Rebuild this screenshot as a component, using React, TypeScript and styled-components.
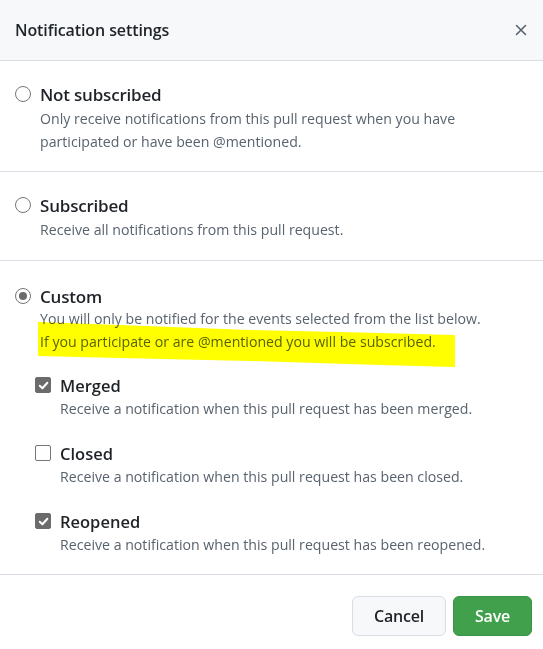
import styled, { createGlobalStyle } from 'styled-components';

const GlobalStyle = createGlobalStyle`
  html, body {
    margin: 0;
    padding: 0;
    background: #ffffff;
  }
  body {
    font-family: "Open Sans", "Noto Sans", "Liberation Sans", sans-serif;
    color: #1f2328;
  }
`

const Dialog = styled.div`
  width: 543px;
  height: 649px;
  display: flex;
  flex-direction: column;
  background: #ffffff;
  position: relative;
  overflow: hidden;
`

const Header = styled.div`
  display: flex;
  justify-content: space-between;
  align-items: center;
  height: 61px;
  padding: 0 14px 0 15px;
  background: #f6f8fa;
  border-bottom: 1px solid #d8dee4;
  box-sizing: border-box;
  .title{
    font-size: 16px;
    font-weight: 600;
    letter-spacing: -0.1px;
  }
`

const CloseButton = styled.button`
  width: 16px;
  height: 16px;
  padding: 0;
  border: none;
  background: transparent;
  display: flex;
  align-items: center;
  justify-content: center;
`

const Section = styled.div<{ $pad: string }>`
  position: relative;
  padding: ${p => p.$pad};
  border-bottom: 1px solid #d8dee4;
`

const OptionRow = styled.label`
  display: flex;
  align-items: center;
  height: 22px;
  gap: 9px;
`

const Radio = styled.span<{ $checked?: boolean }>`
  width: 16px;
  height: 16px;
  box-sizing: border-box;
  border-radius: 50%;
  border: 1px solid #767676;
  background: #ffffff;
  display: flex;
  align-items: center;
  justify-content: center;
  flex-shrink: 0;
  &::after{
    content: '';
    display: ${p => (p.$checked ? 'block' : 'none')};
    width: 8px;
    height: 8px;
    border-radius: 50%;
    background: #6b6b6b;
  }
`

const OptionTitle = styled.span`
  font-size: 17px;
  font-weight: 600;
  color: #1f2328;
  letter-spacing: -0.2px;
`

const Description = styled.div<{ $gap?: number }>`
  margin: ${p => p.$gap ?? 2}px 0 0 25px;
  font-size: 14.15px;
  line-height: 23px;
  color: #59636e;
`

const EventList = styled.div`
  display: flex;
  flex-direction: column;
  gap: 21px;
  margin: 21px 0 0 20px;
`

const EventItem = styled.div`
  display: flex;
  flex-direction: column;
`

const EventRow = styled.label`
  display: flex;
  align-items: center;
  height: 22px;
  gap: 9px;
`

const Checkbox = styled.span<{ $checked?: boolean }>`
  width: 16px;
  height: 16px;
  border-radius: 2px;
  box-sizing: border-box;
  flex-shrink: 0;
  display: flex;
  align-items: center;
  justify-content: center;
  border: 1px solid ${p => (p.$checked ? '#6b6b6b' : '#767676')};
  background: ${p => (p.$checked ? '#6b6b6b' : '#ffffff')};
`

const EventTitle = styled.span`
  font-size: 16.5px;
  font-weight: 600;
  color: #1f2328;
`

const EventDesc = styled.div`
  margin: 1px 0 0 25px;
  font-size: 14.15px;
  line-height: 24px;
  color: #59636e;
`

const Highlight = styled.svg`
  position: absolute;
  left: 0;
  top: 0;
  width: 543px;
  height: 649px;
  pointer-events: none;
  mix-blend-mode: multiply;
`

const Footer = styled.div`
  display: flex;
  justify-content: flex-end;
  gap: 7px;
  padding: 21px 11px 0;
`

const Button = styled.button<{ $primary?: boolean }>`
  height: 40px;
  padding: 0 21px;
  border-radius: 6px;
  font-family: inherit;
  font-size: 16px;
  font-weight: 600;
  letter-spacing: -0.2px;
  color: ${p => (p.$primary ? '#ffffff' : '#1f2328')};
  background: ${p => (p.$primary ? '#40a04b' : '#f6f8fa')};
  border: 1px solid ${p => (p.$primary ? '#3a9445' : '#d8dee4')};
`

const Check = () => (
  <svg width="11" height="11" viewBox="0 0 10 10">
    <path d="M1.6 5.2 L4 7.5 L8.5 2.5" fill="none" stroke="#ffffff" strokeWidth="1.8" strokeLinecap="round" strokeLinejoin="round" />
  </svg>
)

const events = [
  { name: 'Merged', desc: 'Receive a notification when this pull request has been merged.', checked: true },
  { name: 'Closed', desc: 'Receive a notification when this pull request has been closed.', checked: false },
  { name: 'Reopened', desc: 'Receive a notification when this pull request has been reopened.', checked: true },
]

export default function App() {
  return (
    <Dialog>
      <GlobalStyle />
      <Header>
        <span className="title">Notification settings</span>
        <CloseButton aria-label="Close">
          <svg width="12" height="12" viewBox="0 0 12 12">
            <path d="M1.5 1.5 L10.5 10.5 M10.5 1.5 L1.5 10.5" stroke="#59636e" strokeWidth="1.6" strokeLinecap="round" />
          </svg>
        </CloseButton>
      </Header>
      <Section $pad="22px 15px 18px">
        <OptionRow>
          <Radio />
          <OptionTitle>Not subscribed</OptionTitle>
        </OptionRow>
        <Description>
          Only receive notifications from this pull request when you have<br />
          participated or have been @mentioned.
        </Description>
      </Section>
      <Section $pad="22px 15px 19px">
        <OptionRow>
          <Radio />
          <OptionTitle>Subscribed</OptionTitle>
        </OptionRow>
        <Description>Receive all notifications from this pull request.</Description>
      </Section>
      <Section $pad="24px 15px 17px">
        <OptionRow>
          <Radio $checked />
          <OptionTitle>Custom</OptionTitle>
        </OptionRow>
        <Description $gap={0}>
          You will only be notified for the events selected from the list below.<br />
          If you participate or are @mentioned you will be subscribed.
        </Description>
        <EventList>
          {events.map(e => (
            <EventItem key={e.name}>
              <EventRow>
                <Checkbox $checked={e.checked}>{e.checked && <Check />}</Checkbox>
                <EventTitle>{e.name}</EventTitle>
              </EventRow>
              <EventDesc>{e.desc}</EventDesc>
            </EventItem>
          ))}
        </EventList>
      </Section>
      <Footer>
        <Button>Cancel</Button>
        <Button $primary>Save</Button>
      </Footer>
      <Highlight viewBox="0 0 543 649">
        <path d="M38 322 L120 325 L250 330 L380 333 L455 335 L455 367 L380 365 L250 361 L120 358 L38 356 Z" fill="#ffff00" />
      </Highlight>
    </Dialog>
  )
}
